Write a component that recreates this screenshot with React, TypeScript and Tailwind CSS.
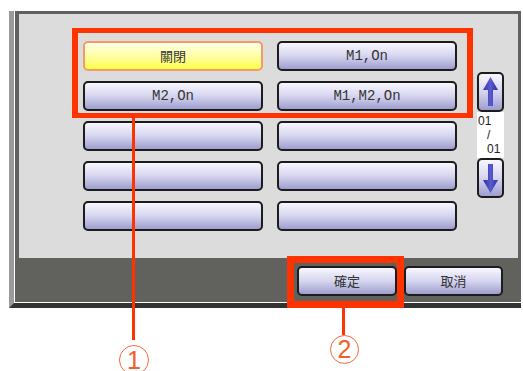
import React from "react";

const mono = { fontFamily: '"Liberation Mono", "DejaVu Sans Mono", monospace' };
const cjk = { fontFamily: '"Noto Sans CJK JP", "Noto Sans CJK TC", sans-serif' };

function Btn({ children, yellow, cls = "", font = mono }: { children?: React.ReactNode; yellow?: boolean; cls?: string; font?: React.CSSProperties }) {
  return (
    <div
      style={font}
      className={
        "flex items-center justify-center rounded-[5px] border-2 text-[#333] " +
        (yellow
          ? "border-[#f39a6a] bg-linear-to-b from-[#ffffe6] to-[#ffff3a] "
          : "border-[#1c1c1c] bg-linear-to-b from-[#f8f7fe] via-[#d6d5ef] to-[#9e9ecf] ") +
        cls
      }
    >
      {children}
    </div>
  );
}

function Arrow({ down }: { down?: boolean }) {
  return (
    <svg width="15" height="30" viewBox="0 0 15 30" style={{ transform: down ? "rotate(180deg)" : undefined }}>
      <defs>
        <linearGradient id={down ? "gd" : "gu"} x1="0" y1="0" x2="1" y2="0">
          <stop offset="0" stopColor="#3535a8" />
          <stop offset="0.5" stopColor="#5a5ad0" />
          <stop offset="1" stopColor="#2c2c96" />
        </linearGradient>
      </defs>
      <polygon
        points="7.5,0 15,13 10,13 10,29 5,29 5,13 0,13"
        fill={`url(#${down ? "gd" : "gu"})`}
      />
    </svg>
  );
}

export default function App() {
  return (
    <div className="relative w-[523px] h-[371px] overflow-hidden bg-white pt-[11px] pl-[9px]">
      {/* device frame */}
      <div className="w-[512px] h-[297px] border-l-[5px] border-l-[#9a9a9a] border-b-[5px] border-b-[#333333]">
        <div className="h-full border-l border-b border-white">
          <div className="h-full flex flex-col bg-[#61625e] pt-[3px] pl-[4px] pr-[3px]">
            {/* panel */}
            <div className="h-[244px] bg-[#dcdcdc] flex pl-[64px] pt-[27px]">
              <div className="grid grid-cols-[180px_180px] auto-rows-[30px] gap-x-[14px] gap-y-[10px] h-fit">
                <Btn yellow font={cjk} cls="text-[13px]">關閉</Btn>
                <Btn cls="text-[14px]">M1,On</Btn>
                <Btn cls="text-[14px]">M2,On</Btn>
                <Btn cls="text-[14px]">M1,M2,On</Btn>
                <Btn />
                <Btn />
                <Btn />
                <Btn />
                <Btn />
                <Btn />
              </div>
              <div className="ml-[20px] mt-[31px] w-[27px] flex flex-col">
                <Btn cls="h-[40px]">
                  <Arrow />
                </Btn>
                <div
                  className="h-[46px] bg-white text-[12px] leading-[14px] text-[#222] pt-[2px]"
                  style={{ fontFamily: '"Liberation Sans", Arial, sans-serif' }}
                >
                  <div className="pl-[1px]">01</div>
                  <div className="pl-[10px]">/</div>
                  <div className="pl-[10px]">01</div>
                </div>
                <Btn cls="h-[40px]">
                  <Arrow down />
                </Btn>
              </div>
            </div>
            {/* footer */}
            <div className="flex-1 flex justify-end items-start gap-[7px] pt-[8px] pr-[15px]">
              <Btn font={cjk} cls="w-[100px] h-[30px] text-[13px]">確定</Btn>
              <Btn font={cjk} cls="w-[99px] h-[30px] text-[13px]">取消</Btn>
            </div>
          </div>
        </div>
      </div>

      {/* annotations */}
      <div className="absolute left-[72px] top-[28px] w-[401px] h-[90px] border-x-[6px] border-y-[5px] border-[#ff3300]" />
      <div className="absolute left-[132px] top-[118px] w-[3px] h-[222px] bg-[#ff3300]" />
      <div
        className="absolute left-[119px] top-[345px] w-[30px] h-[30px] rounded-full border-[1.5px] border-[#f06a3a] flex items-center justify-center text-[25px] leading-none text-[#f0602a]"
        style={{ fontFamily: '"Liberation Sans", Arial, sans-serif' }}
      >
        1
      </div>

      <div className="absolute left-[287px] top-[256px] w-[117px] h-[52px] border-[7px] border-[#ff3300]" />
      <div className="absolute left-[342px] top-[308px] w-[3px] h-[27px] bg-[#ff3300]" />
      <div
        className="absolute left-[330px] top-[335px] w-[29px] h-[29px] rounded-full border-[1.5px] border-[#f06a3a] flex items-center justify-center text-[25px] leading-none text-[#f0602a]"
        style={{ fontFamily: '"Liberation Sans", Arial, sans-serif' }}
      >
        2
      </div>
    </div>
  );
}
